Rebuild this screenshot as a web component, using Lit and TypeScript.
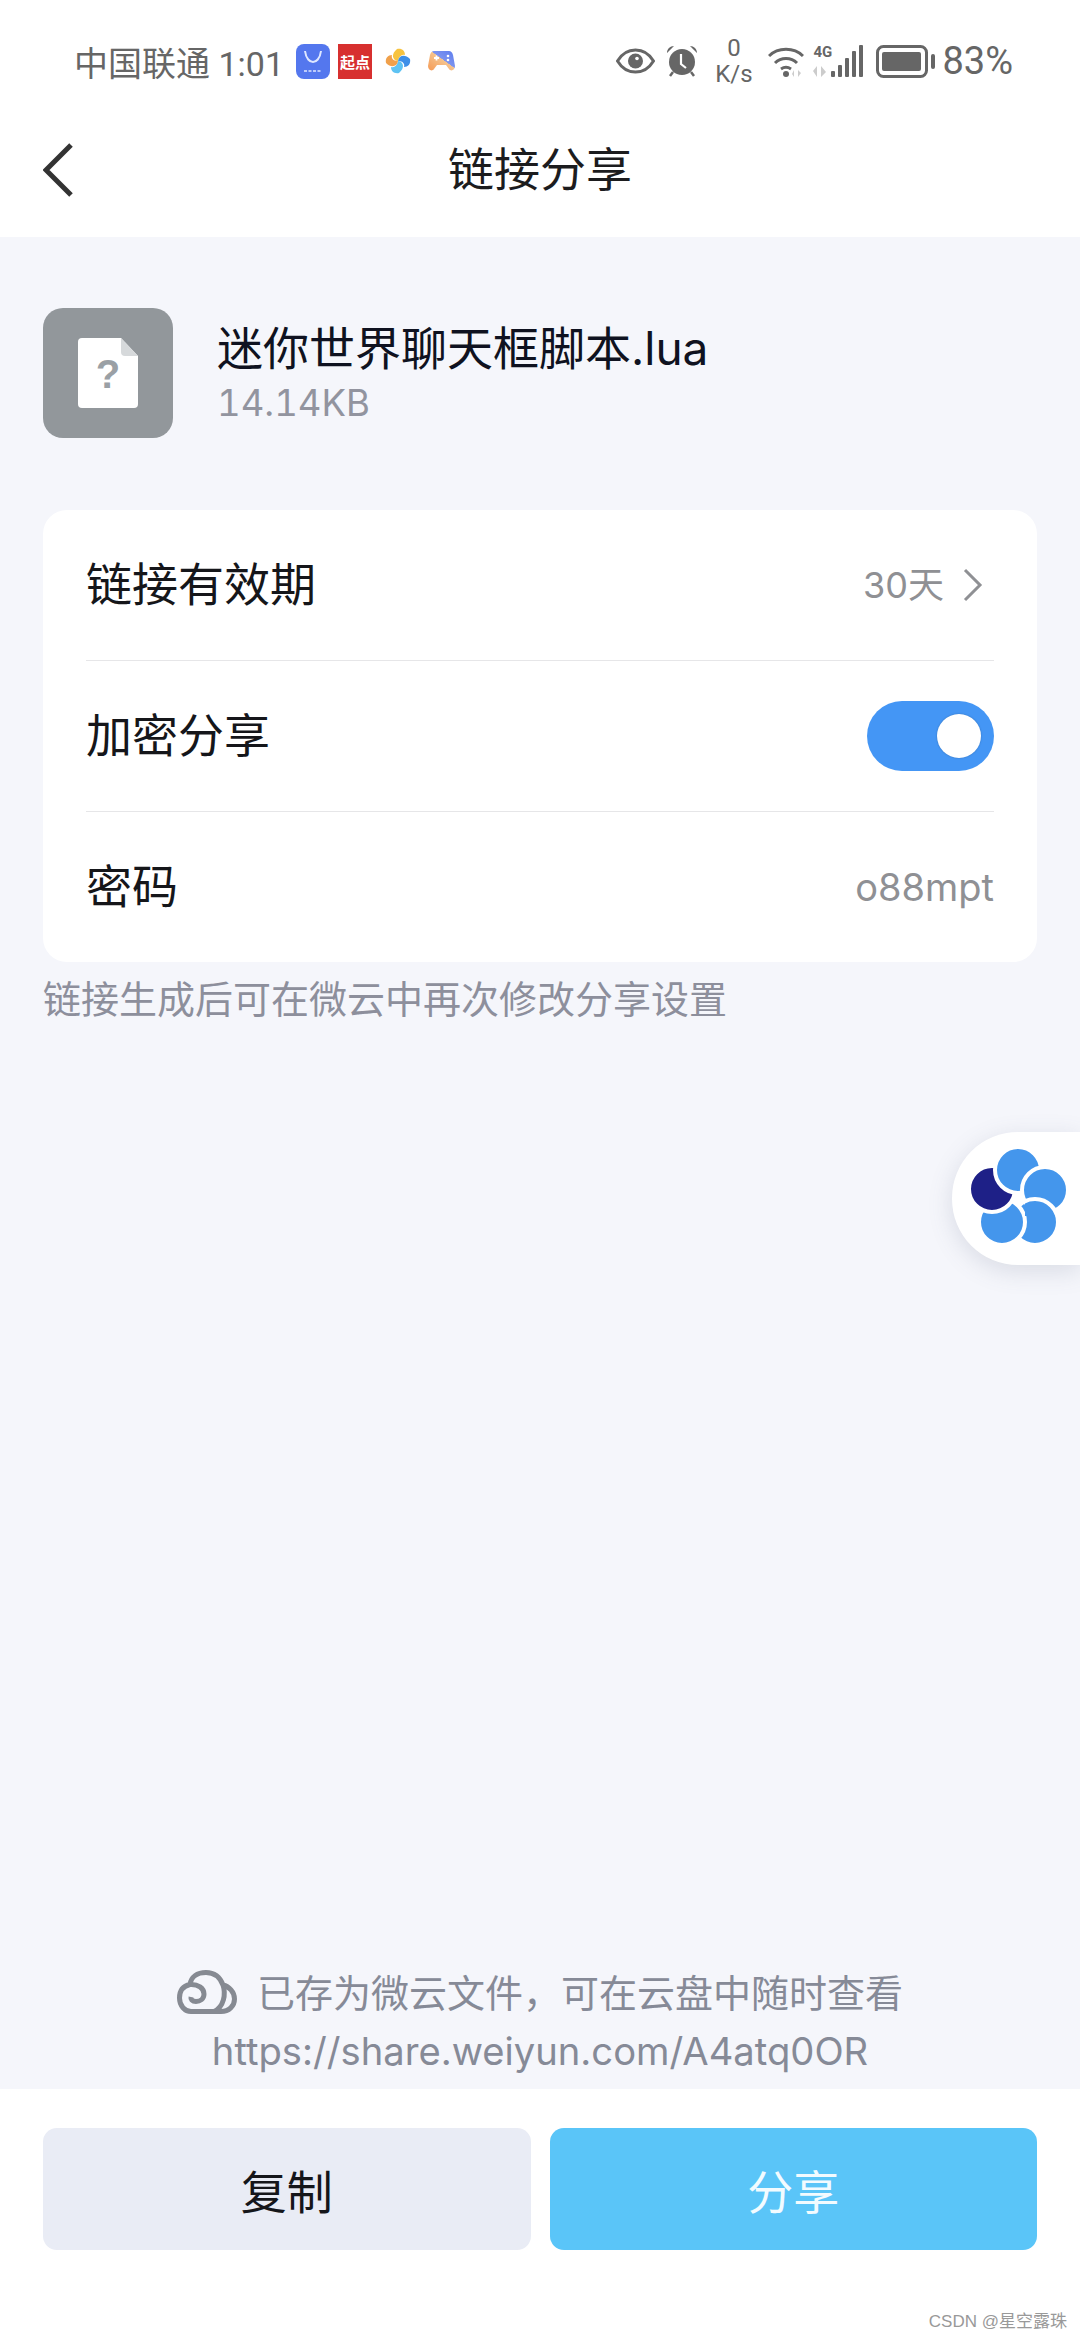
import { LitElement, css, html, svg } from "lit";
import { customElement } from "lit/decorators.js";

const FLOWER = svg`
  <defs><clipPath id="petal-clip"><rect x="73" y="50" width="40" height="34"/></clipPath></defs>
  <g stroke="#fff" stroke-width="4">
    <circle cx="83" cy="90" r="23" fill="#4496ec"/>
    <circle cx="50" cy="90" r="23" fill="#4496ec"/>
    <circle cx="40" cy="57" r="23" fill="#1e2087"/>
    <circle cx="66" cy="38" r="23" fill="#4496ec"/>
    <circle cx="93" cy="58" r="23" fill="#4496ec"/>
    <circle cx="83" cy="90" r="23" fill="#4496ec" clip-path="url(#petal-clip)"/>
  </g>`;

@customElement("status-bar")
class StatusBar extends LitElement {
  render() {
    return html`
      <div class="side">
        <span class="carrier">中国联通 1:01</span>
        <span class="app blue">
          <svg width="34" height="35" viewBox="0 0 34 35">
            <path d="M9 7c1 8 5 11 8 11s7-3 8-11" fill="none" stroke="#dfe8ff" stroke-width="2"/>
            <path d="M8 27h18" stroke="#dfe8ff" stroke-width="1.5" stroke-dasharray="3 1.5"/>
          </svg>
        </span>
        <span class="app red">起点</span>
        <svg class="swirl" width="26" height="26" viewBox="0 0 26 26">
          <path d="M13 13C7 12 6 6 12 1c5-1 8 2 8 6-3-1-6 1-7 6z" fill="#f7c33f"/>
          <path d="M13 13c1-6 7-7 12-2 1 5-2 8-6 8 1-3-1-6-6-6z" fill="#3d8fe8"/>
          <path d="M13 13c6 1 7 7 1 12-5 1-8-2-8-6 3 1 6-1 7-6z" fill="#5ec3f3"/>
          <path d="M13 13c-1 6-7 7-12 2-1-5 2-8 6-8-1 3 1 6 6 6z" fill="#f0a04b"/>
        </svg>
        <svg class="pad" width="27" height="22" viewBox="0 0 27 22">
          <defs><linearGradient id="pad-g" x1="0" y1="1" x2="1" y2="0">
            <stop offset="0" stop-color="#f59a55"/><stop offset=".55" stop-color="#f5c38d"/><stop offset=".56" stop-color="#7d94ee"/><stop offset="1" stop-color="#5b7cf0"/>
          </linearGradient></defs>
          <path d="M6 1h15c2 0 3 1 4 4l2 11c0 4-4 6-6 3l-3-4H9l-3 4c-2 3-6 1-6-3L2 5c1-3 2-4 4-4z" fill="url(#pad-g)"/>
          <path d="M6 8h5M8.500 5.500v5" stroke="#fff" stroke-width="1.800"/>
          <circle cx="20" cy="6" r="1.300" fill="#fff"/><circle cx="20" cy="10" r="1.300" fill="#fff"/>
        </svg>
      </div>
      <div class="side">
        <svg class="eye" width="39" height="26" viewBox="0 0 39 26">
          <path d="M1.500 13C6 5.500 12 2 19.500 2S33 5.500 37.500 13C33 20.500 27 24 19.500 24S6 20.500 1.500 13z" fill="none" stroke="#666" stroke-width="3"/>
          <circle cx="19.500" cy="13" r="7.500" fill="#666"/><circle cx="21" cy="10.500" r="1.800" fill="#fff"/>
        </svg>
        <svg class="alarm" width="32" height="32" viewBox="0 0 32 32">
          <circle cx="16" cy="17" r="13" fill="#666"/>
          <path d="M1 8c0-4 3-7 7-7zM31 8c0-4-3-7-7-7z" fill="#666"/>
          <path d="M7 27l-3 4M25 27l3 4" stroke="#666" stroke-width="2.500"/>
          <path d="M15 9v10l5 4" fill="none" stroke="#fff" stroke-width="2.200"/>
        </svg>
        <span class="speed"><span>0</span><span>K/s</span></span>
        <svg class="wifi" width="36" height="33" viewBox="0 0 36 33">
          <path d="M1 11C10 2 26 2 35 11M7 18c6-6 16-6 22 0M13 24c3-2 7-2 10 0" fill="none" stroke="#666" stroke-width="3"/>
          <circle cx="18" cy="29" r="3" fill="#666"/>
          <path d="M26 32v-7l-2 4zM30 25v7l3-4z" fill="#ccc"/>
        </svg>
        <span class="net">
          <span class="g4">4G</span>
          <svg width="14" height="11" viewBox="0 0 14 11"><path d="M4 11V0L0 5zM8 0v11l5-5z" fill="#ccc"/></svg>
        </span>
        <svg class="bars" width="32" height="32" viewBox="0 0 32 32">
          <g fill="#666"><rect x="0" y="26" width="4" height="6" rx="1"/><rect x="7" y="20" width="4" height="12" rx="1"/><rect x="14" y="13" width="4" height="19" rx="1"/><rect x="21" y="6" width="4" height="26" rx="1"/><rect x="28" y="0" width="4" height="32" rx="1"/></g>
        </svg>
        <svg class="batt" width="59" height="33" viewBox="0 0 59 33">
          <rect x="1.500" y="1.500" width="49" height="30" rx="6" fill="none" stroke="#666" stroke-width="3"/>
          <rect x="6" y="7" width="39" height="19" rx="2" fill="#666"/>
          <rect x="55" y="9" width="4" height="15" rx="2" fill="#666"/>
        </svg>
        <span class="pct">83%</span>
      </div>
    `;
  }

  static styles = css`
    :host {
      display: flex;
      justify-content: space-between;
      align-items: center;
      height: 74px;
      padding: 24px 67px 0 74px;
      color: #666;
      font-family: Roboto, "Noto Sans CJK SC", sans-serif;
    }
    .side {
      display: flex;
      align-items: center;
    }
    .carrier {
      font-size: 34px;
      white-space: nowrap;
    }
    .app {
      width: 34px;
      height: 35px;
      display: flex;
      align-items: center;
      justify-content: center;
      box-sizing: border-box;
    }
    .blue {
      margin-left: 12px;
      background: #5477ee;
      border-radius: 8px;
    }
    .red {
      margin-left: 8px;
      background: #d7302f;
      color: #fff;
      font-size: 15px;
      font-weight: 700;
      white-space: nowrap;
    }
    .swirl { margin-left: 13px; }
    .pad { margin-left: 17px; }
    .alarm { margin-left: 11px; }
    .speed {
      margin-left: 17px;
      width: 37px;
      display: flex;
      flex-direction: column;
      align-items: center;
      font-size: 24px;
      line-height: 26px;
      white-space: nowrap;
    }
    .wifi { margin-left: 16px; }
    .net {
      margin-left: 9px;
      display: flex;
      flex-direction: column;
      gap: 6px;
      width: 18px;
    }
    .g4 {
      font: 700 15px/15px "Liberation Sans Narrow", Roboto, sans-serif;
      color: #666;
    }
    .batt { margin-left: 13px; }
    .pct {
      margin-left: 7px;
      font-size: 38px;
    }
  `;
}

@customElement("app-root")
class AppRoot extends LitElement {
  render() {
    return html`
      <status-bar></status-bar>
      <header class="nav">
        <svg class="back" width="30" height="54" viewBox="0 0 30 54">
          <path d="M28 2L3 27l25 25" fill="none" stroke="#333" stroke-width="5"/>
        </svg>
        <span>链接分享</span>
      </header>

      <main>
        <div class="file">
          <div class="thumb">
            <svg width="60" height="70" viewBox="0 0 60 70">
              <path d="M4 0h39l17 18v48a4 4 0 0 1-4 4H4a4 4 0 0 1-4-4V4a4 4 0 0 1 4-4z" fill="#fff"/>
              <path d="M43 0l17 18H47a4 4 0 0 1-4-4z" fill="#d6d9db"/>
              <text x="30" y="50" text-anchor="middle" class="qm">?</text>
            </svg>
          </div>
          <div class="meta">
            <div class="name">迷你世界聊天框脚本.lua</div>
            <div class="size">14.14KB</div>
          </div>
        </div>

        <section class="card">
          <div class="row">
            <span>链接有效期</span>
            <span class="value days">30天
              <svg width="20" height="34" viewBox="0 0 20 34"><path d="M2 2l15 15L2 32" fill="none" stroke="#8f9094" stroke-width="3"/></svg>
            </span>
          </div>
          <div class="row">
            <span>加密分享</span>
            <span class="toggle"><i></i></span>
          </div>
          <div class="row">
            <span>密码</span>
            <span class="value">o88mpt</span>
          </div>
        </section>
        <p class="hint">链接生成后可在微云中再次修改分享设置</p>

        <div class="note">
          <div class="saved">
            <svg width="60" height="46" viewBox="0 0 60 46">
              <path d="M14 41.500H44C52 41.500 57.500 36 57.500 29 57.500 22 52 16.500 46 15 43 7 37 2.500 29 2.500 20 2.500 14 7 13 14.500 6 16 2.500 21 2.500 28 2.500 36 8 41.500 14 41.500zM13 14.500C21 14 27 18 27 24 27 29 23 31.500 19 31.500 15 31.500 13.500 29 14 27M46 15C49 24 47 37 37 41.500" fill="none" stroke="#868a92" stroke-width="5"/>
            </svg>
            <span>已存为微云文件，可在云盘中随时查看</span>
          </div>
          <div class="url">https://share.weiyun.com/A4atq0OR</div>
        </div>
      </main>

      <footer>
        <button class="copy">复制</button>
        <button class="share">分享</button>
      </footer>

      <aside class="float">
        <svg width="133" height="133" viewBox="0 0 133 133">${FLOWER}</svg>
      </aside>
      <span class="mark">CSDN @星空露珠</span>
    `;
  }

  static styles = css`
    :host {
      display: flex;
      flex-direction: column;
      position: relative;
      width: 1080px;
      height: 2340px;
      overflow: hidden;
      background: #fff;
      font-family: Inter, "Noto Sans CJK SC", sans-serif;
      color: #15161a;
    }
    .nav {
      height: 139px;
      display: flex;
      align-items: center;
      justify-content: center;
      position: relative;
      font-size: 46px;
      color: #1c1c1e;
    }
    .nav span {
      margin-top: -3px;
    }
    .back {
      position: absolute;
      left: 43px;
      top: 45px;
    }
    main {
      flex: 1;
      display: flex;
      flex-direction: column;
      background: #f5f6fb;
      padding: 71px 43px 0;
    }
    .file {
      display: flex;
      align-items: center;
      gap: 44px;
    }
    .thumb {
      width: 130px;
      height: 130px;
      display: flex;
      align-items: center;
      justify-content: center;
      background: #92979b;
      border-radius: 20px;
    }
    .qm {
      font: 700 40px "Liberation Sans", sans-serif;
      fill: #9aa0a5;
    }
    .name {
      font-size: 46px;
      line-height: 60px;
      color: #0f1220;
    }
    .size {
      font-size: 36.500px;
      line-height: 50px;
      font-feature-settings: "tnum";
      color: #92949f;
    }
    .card {
      margin-top: 72px;
      padding: 0 43px;
      background: #fff;
      border-radius: 24px;
    }
    .row {
      height: 150px;
      display: flex;
      align-items: center;
      justify-content: space-between;
      font-size: 46px;
      line-height: 50px;
      color: #15161a;
    }
    .row > span:first-child {
      margin-top: -2px;
    }
    .row + .row {
      border-top: 1px solid #e6e6e8;
    }
    .value {
      display: flex;
      align-items: center;
      font-size: 38px;
      color: #8f9094;
    }
    .days {
      gap: 19px;
      font-size: 36px;
    }
    .value svg {
      margin-right: 11px;
    }
    .toggle {
      width: 127px;
      height: 70px;
      display: flex;
      align-items: center;
      justify-content: flex-end;
      padding-right: 13px;
      box-sizing: border-box;
      background: #4496f5;
      border-radius: 35px;
    }
    .toggle i {
      width: 44px;
      height: 44px;
      background: #fff;
      border-radius: 50%;
      box-shadow: 0 0 2px rgba(0, 0, 0, 0.25);
    }
    .hint {
      margin: 14px 0 0;
      font-size: 38px;
      line-height: 46px;
      color: #8d8f9c;
    }
    .note {
      margin-top: auto;
      padding-bottom: 14px;
      display: flex;
      flex-direction: column;
      align-items: center;
      gap: 10px;
      font-size: 38px;
      line-height: 48px;
      color: #868a97;
    }
    .url {
      font-size: 38.200px;
    }
    .saved {
      display: flex;
      align-items: center;
      gap: 20px;
    }
    footer {
      height: 251px;
      box-sizing: border-box;
      padding: 39px 43px 0;
      display: flex;
      gap: 19px;
      background: #fff;
    }
    button {
      flex: 1;
      height: 122px;
      border: 0;
      border-radius: 14px;
      font: 46px Inter, "Noto Sans CJK SC", sans-serif;
    }
    .copy {
      background: #e9ecf5;
      color: #15161a;
    }
    .share {
      background: #5ac5f8;
      color: #f2fbff;
    }
    .float {
      position: absolute;
      left: 952px;
      top: 1132px;
      width: 128px;
      height: 133px;
      background: #fff;
      border-radius: 66px 0 0 66px;
      box-shadow: 0 6px 24px rgba(90, 100, 130, 0.18);
    }
    .mark {
      position: absolute;
      right: 13px;
      bottom: 8px;
      font: 17px "Liberation Sans", "Noto Sans CJK SC", sans-serif;
      color: #999;
    }
  `;
}
